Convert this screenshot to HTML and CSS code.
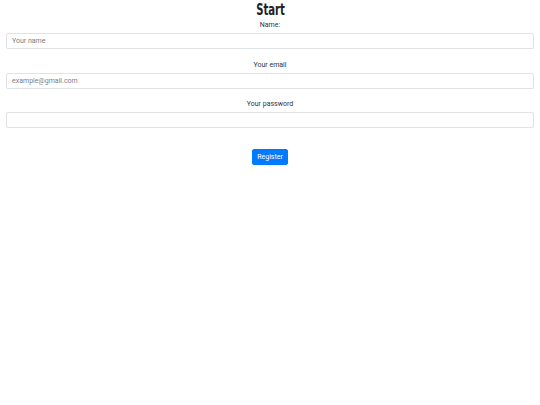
FILE: index.html
```html
<!DOCTYPE html>
<html>
<head>
<meta charset="utf-8">
<link rel="stylesheet" href="styles.css">
</head>
<body>
<div class="page">
  <h1 class="title"><span class="title-text">Start</span></h1>
  <form class="form">
    <div class="field">
      <label class="label">Name:</label>
      <input class="input" type="text" placeholder="Your name">
    </div>
    <div class="field">
      <label class="label">Your email</label>
      <input class="input" type="email" placeholder="example@gmail.com">
    </div>
    <div class="field">
      <label class="label">Your password</label>
      <input class="input" type="password">
    </div>
    <div class="actions">
      <button class="btn" type="button">Register</button>
    </div>
  </form>
</div>
</body>
</html>
```

FILE: styles.css
```css
html, body {
  margin: 0;
  padding: 0;
  background: #fff;
}
body {
  font-family: Roboto, "Liberation Sans", Arial, sans-serif;
  color: #212529;
}
.page {
  padding: 0 6px;
}
.title {
  margin: 0;
  text-align: center;
  font-family: "DejaVu Sans", sans-serif;
  font-stretch: condensed;
  font-weight: 700;
  font-size: 16px;
  line-height: 20px;
  color: #222;
}
.title-text {
  display: inline-block;
  transform: scaleX(0.7);
}
.form {
  display: flex;
  flex-direction: column;
}
.field {
  display: flex;
  flex-direction: column;
  margin-bottom: 10.5px;
}
.label {
  text-align: center;
  font-size: 7px;
  line-height: 10px;
  margin: 0 0 3px;
  color: #333;
}
.input {
  box-sizing: border-box;
  height: 16px;
  width: 100%;
  margin: 0;
  padding: 0 5px;
  border: 1px solid #dfe2e6;
  border-radius: 2px;
  font-family: Roboto, "Liberation Sans", Arial, sans-serif;
  font-size: 7px;
  color: #495057;
  background: #fff;
  outline: none;
}
.input::placeholder {
  color: #7a8087;
}
.actions {
  display: flex;
  justify-content: center;
  padding-top: 10.5px;
}
.btn {
  box-sizing: border-box;
  height: 16px;
  width: 36px;
  padding: 0;
  border: 1px solid #007bff;
  border-radius: 2px;
  background: #007bff;
  color: #fff;
  font-family: Roboto, "Liberation Sans", Arial, sans-serif;
  font-size: 7px;
  line-height: 14px;
}
```
